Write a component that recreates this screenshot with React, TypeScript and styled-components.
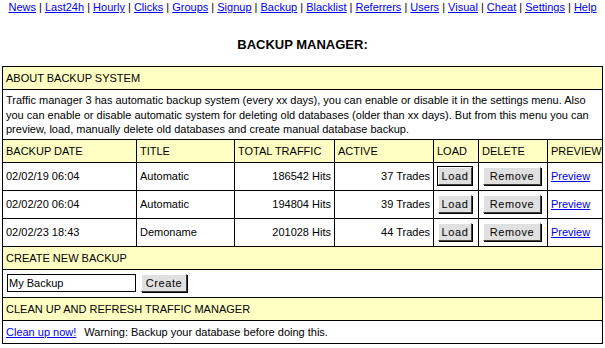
import React from "react";
import styled, { createGlobalStyle } from "styled-components";

const Global = createGlobalStyle`
  html, body { margin: 0; padding: 0; background: #fff; }
  body { font-family: "Liberation Sans", Arial, sans-serif; font-size: 11px; color: #000; }
`;

const Page = styled.div`
  width: 605px;
  padding: 0 2px;
  box-sizing: border-box;
`;

const Nav = styled.div`
  text-align: center;
  font-size: 11px;
  line-height: 14px;
  padding-top: 0;
`;

const NavLink = styled.a`
  color: #0000ee;
  text-decoration: underline;
`;

const Title = styled.h1`
  margin: 23px 0 0;
  height: 29px;
  text-align: center;
  font-size: 13px;
  font-weight: bold;
  line-height: 16px;
`;

const Table = styled.table`
  width: 600px;
  table-layout: fixed;
  border-collapse: collapse;
  font-size: 11px;
`;

const Cell = styled.td<{ $head?: boolean; $right?: boolean; $h?: number }>`
  border: 1px solid #000;
  background: ${(p) => (p.$head ? "#ffffc4" : "#fff")};
  text-align: ${(p) => (p.$right ? "right" : "left")};
  padding: 0 3px;
  height: ${(p) => (p.$h ? p.$h : 22)}px;
  vertical-align: middle;
  white-space: nowrap;
  overflow: hidden;
`;

const TextCell = styled.td`
  border: 1px solid #000;
  padding: 3px 3px 2px;
  line-height: 14.5px;
`;

const Btn = styled.button<{ $focus?: boolean; $w: number }>`
  font-family: "Liberation Sans", Arial, sans-serif;
  font-size: 11px;
  letter-spacing: 0.6px;
  width: ${(p) => p.$w}px;
  height: 18px;
  padding: 0;
  background: #e0e0e0;
  color: #000;
  border: 1px solid;
  border-color: #fff #404040 #404040 #fff;
  box-shadow: ${(p) =>
    p.$focus ? "0 0 0 1px #000" : "1px 1px 0 #000"};
  margin-left: 1px;
  vertical-align: middle;
`;

const Link = styled.a`
  color: #0000ee;
  text-decoration: underline;
`;

const Input = styled.input`
  font-family: "Liberation Sans", Arial, sans-serif;
  font-size: 11px;
  width: 129px;
  height: 18px;
  box-sizing: border-box;
  border: 1px solid #000;
  padding: 0 1px;
  margin: 0 4px 0 1px;
  vertical-align: middle;
`;

const Warning = styled.span`
  margin-left: 8px;
`;

const navItems = [
  "News", "Last24h", "Hourly", "Clicks", "Groups", "Signup", "Backup",
  "Blacklist", "Referrers", "Users", "Visual", "Cheat", "Settings", "Help",
];

const rows = [
  { date: "02/02/19 06:04", title: "Automatic", hits: "186542 Hits", trades: "37 Trades", focus: true },
  { date: "02/02/20 06:04", title: "Automatic", hits: "194804 Hits", trades: "39 Trades" },
  { date: "02/02/23 18:43", title: "Demoname", hits: "201028 Hits", trades: "44 Trades" },
];

export default function App() {
  return (
    <Page>
      <Global />
      <Nav>
        {navItems.map((n, i) => (
          <React.Fragment key={n}>
            {i > 0 && " | "}
            <NavLink href="#">{n}</NavLink>
          </React.Fragment>
        ))}
      </Nav>
      <Title>BACKUP MANAGER:</Title>
      <Table>
        <colgroup>
          <col style={{ width: 134 }} />
          <col style={{ width: 98 }} />
          <col style={{ width: 100 }} />
          <col style={{ width: 99 }} />
          <col style={{ width: 45 }} />
          <col style={{ width: 69 }} />
          <col style={{ width: 55 }} />
        </colgroup>
        <tbody>
          <tr>
            <Cell $head colSpan={7}>ABOUT BACKUP SYSTEM</Cell>
          </tr>
          <tr>
            <TextCell colSpan={7}>
              Traffic manager 3 has automatic backup system (every xx days), you can enable or disable it in the settings menu. Also you can enable or disable automatic system for deleting old databases (older than xx days). But from this menu you can preview, load, manually delete old databases and create manual database backup.
            </TextCell>
          </tr>
          <tr>
            <Cell $head>BACKUP DATE</Cell>
            <Cell $head>TITLE</Cell>
            <Cell $head>TOTAL TRAFFIC</Cell>
            <Cell $head>ACTIVE</Cell>
            <Cell $head>LOAD</Cell>
            <Cell $head>DELETE</Cell>
            <Cell $head>PREVIEW</Cell>
          </tr>
          {rows.map((r) => (
            <tr key={r.date}>
              <Cell $h={27}>{r.date}</Cell>
              <Cell $h={27}>{r.title}</Cell>
              <Cell $h={27} $right>{r.hits}</Cell>
              <Cell $h={27} $right>{r.trades}</Cell>
              <Cell $h={27}><Btn $w={34} $focus={r.focus}>Load</Btn></Cell>
              <Cell $h={27}><Btn $w={58}>Remove</Btn></Cell>
              <Cell $h={27}><Link href="#">Preview</Link></Cell>
            </tr>
          ))}
          <tr>
            <Cell $head colSpan={7}>CREATE NEW BACKUP</Cell>
          </tr>
          <tr>
            <Cell colSpan={7} $h={27}>
              <Input defaultValue="My Backup" />
              <Btn $w={46}>Create</Btn>
            </Cell>
          </tr>
          <tr>
            <Cell $head colSpan={7}>CLEAN UP AND REFRESH TRAFFIC MANAGER</Cell>
          </tr>
          <tr>
            <Cell colSpan={7}>
              <Link href="#">Clean up now!</Link>
              <Warning>Warning: Backup your database before doing this.</Warning>
            </Cell>
          </tr>
        </tbody>
      </Table>
    </Page>
  );
}
